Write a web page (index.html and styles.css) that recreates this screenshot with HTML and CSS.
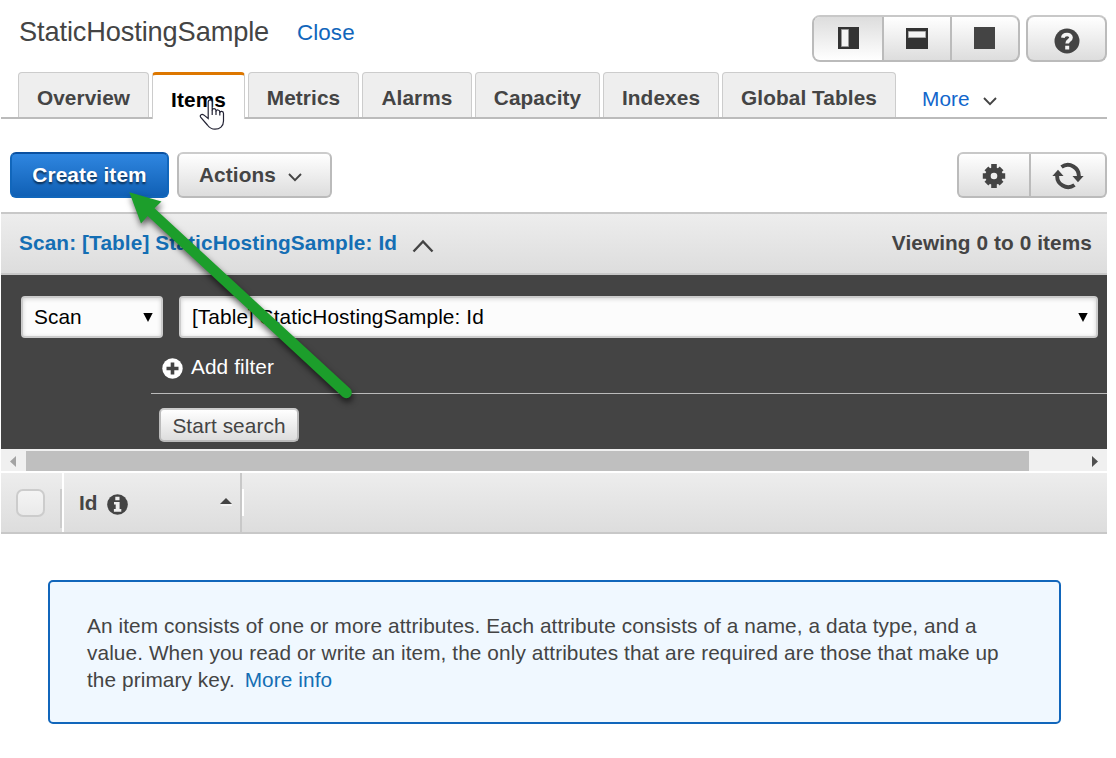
FILE: index.html
```html
<!DOCTYPE html>
<html lang="en">
<head>
<meta charset="utf-8">
<title>StaticHostingSample</title>
<link rel="stylesheet" href="styles.css">
</head>
<body>
<div class="page">
  <header class="header">
    <h1 class="title">StaticHostingSample</h1>
    <a class="close">Close</a>
    <div class="group layout-group">
      <button class="seg seg-active"><svg width="22" height="22" viewBox="0 0 22 22"><path fill="#333" d="M0 0h21v22H0z"/><path fill="#f4f4f4" stroke="#999" d="M3.500 2.500h7v17h-7z"/></svg></button>
      <button class="seg"><svg width="22" height="22" viewBox="0 0 22 22"><path fill="#333" d="M0 1h22v21H0z"/><path fill="#f4f4f4" stroke="#aaa" d="M2.500 4.500h17v6h-17z"/></svg></button>
      <button class="seg"><svg width="22" height="22" viewBox="0 0 22 22"><path fill="#444" d="M0 0h21v22H0z"/></svg></button>
    </div>
    <div class="group help-group">
      <button class="seg"><svg width="26" height="26" viewBox="0 0 26 26"><circle cx="13" cy="13" r="12.500" fill="#444"/><path d="M8.800 9.800C9.300 5.500 16.900 5.400 17 9.500C17 12.600 13.200 12 13.200 15.600" fill="none" stroke="#f4f4f4" stroke-width="3.700"/><path d="M11.200 17.700h4v3.900h-4z" fill="#f4f4f4"/></svg></button>
    </div>
  </header>

  <nav class="tabs">
    <a class="tab t-overview">Overview</a>
    <a class="tab tab-active t-items">Items</a>
    <a class="tab t-metrics">Metrics</a>
    <a class="tab t-alarms">Alarms</a>
    <a class="tab t-capacity">Capacity</a>
    <a class="tab t-indexes">Indexes</a>
    <a class="tab t-global">Global Tables</a>
    <a class="more">More <svg width="14" height="9" viewBox="0 0 14 9"><path d="M1 1l6 6.200L13 1" fill="none" stroke="#444" stroke-width="1.900"/></svg></a>
  </nav>

  <div class="toolbar">
    <button class="btn primary">Create item</button>
    <button class="btn actions">Actions <svg width="14" height="9" viewBox="0 0 14 9"><path d="M1 1l6 6.200L13 1" fill="none" stroke="#444" stroke-width="1.900"/></svg></button>
    <div class="group tools-group">
      <button class="seg seg-gear"><svg width="24" height="26" viewBox="-12 -13 24 26"><g fill="#444"><circle r="8.700"/><path d="M-2.800-12h5.600v24h-5.600z"/><path d="M-11.200-2.700h22.400v5.400h-22.400z"/><path d="M-2.700-10.700h5.400v21.400h-5.400z" transform="rotate(45)"/><path d="M-2.700-10.700h5.400v21.400h-5.400z" transform="rotate(-45)"/></g><circle r="3.300" fill="#efefef"/></svg></button>
      <button class="seg"><svg width="32" height="28" viewBox="-16 -14 32 28"><g><path d="M-6.500-9A11 11 0 0 1 10.800 1" fill="none" stroke="#444" stroke-width="3.900"/><path d="M4.500 0L15.600 0L10 6.300z" fill="#444"/></g><g transform="rotate(180)"><path d="M-6.500-9A11 11 0 0 1 10.800 1" fill="none" stroke="#444" stroke-width="3.900"/><path d="M4.500 0L15.600 0L10 6.300z" fill="#444"/></g></svg></button>
    </div>
  </div>

  <div class="scanbar">
    <a class="scan-title">Scan: [Table] StaticHostingSample: Id</a>
    <svg class="scan-caret" width="22" height="14" viewBox="0 0 22 14"><path d="M1.500 12.500L11 2.500l9.500 10" fill="none" stroke="#444" stroke-width="2.400"/></svg>
    <span class="viewing">Viewing 0 to 0 items</span>
  </div>

  <section class="query">
    <div class="selects">
      <div class="select select-op"><span>Scan</span><svg width="10" height="9" viewBox="0 0 10 9"><path d="M.300 0h9.400L5 9z"/></svg></div>
      <div class="select select-table"><span>[Table] StaticHostingSample: Id</span><svg width="10" height="9" viewBox="0 0 10 9"><path d="M.300 0h9.400L5 9z"/></svg></div>
    </div>
    <div class="filter">
      <svg width="21" height="21" viewBox="0 0 21 21"><circle cx="10.500" cy="10.500" r="10.200" fill="#fff"/><path d="M10.500 4.500v12M4.500 10.500h12" stroke="#444" stroke-width="3.600"/></svg>
      <span>Add filter</span>
    </div>
    <button class="start">Start search</button>
  </section>

  <div class="scrollbar">
    <svg width="25" height="22" viewBox="0 0 25 22"><path d="M15 7v11L9 12.500z" fill="#a3a3a3"/></svg>
    <div class="thumb"></div>
    <svg width="25" height="22" viewBox="0 0 25 22"><path d="M10 7v11l6-5.500z" fill="#505050"/></svg>
  </div>

  <div class="thead">
    <div class="th-check"><span class="checkbox"></span><span class="rule-grey"></span></div>
    <div class="th-id">
      <span>Id</span>
      <svg class="info-icon" width="21" height="21" viewBox="0 0 21 21"><circle cx="10.500" cy="10.500" r="10.300" fill="#444"/><path fill="#eee" d="M8.300 2.800h4.200v3.500H8.300zM7 8h5.600v7h1.700v2.700H6.900V15h1.800v-4.400H7z"/></svg>
      <svg class="sort" width="12" height="8" viewBox="0 0 12 8"><path d="M0 6L6 0l6 6z" fill="#444"/><path d="M1 7h11" stroke="#fff"/></svg>
    </div>
    <span class="rule-white"></span>
  </div>

  <div class="notice">An item consists of one or more attributes. Each attribute consists of a name, a data type, and a<br>value. When you read or write an item, the only attributes that are required are those that make up<br>the primary key. <a class="info-link">More info</a></div>
</div>

<svg class="cursor" width="28" height="34" viewBox="0 0 28 34"><path d="M9.200 20.500V4.200c0-3 4-3 4 0v8.300c0-2.500 3.800-2.400 3.800.200v.800c.200-2.200 3.800-2 3.800.400v.800c.400-2 3.700-1.600 3.700.700v7.500c0 5.400-3.800 8.300-8.500 8.300c-3.500 0-5.700-1.600-7.600-4.200L1.800 19.500c-1.500-2.100.8-4.100 2.900-2.600z" fill="#fff" stroke="#223" stroke-width="1.200"/><path d="M13.200 12v5M17 13v4M20.800 14v3.500" stroke="#223" stroke-width="1.200"/></svg>
<svg class="pointer" width="250" height="235" viewBox="120 180 250 235"><path d="M129.300 192.300L161.500 201.500L154.500 208.300L350 388.600A5.500 5.500 0 0 1 342.500 396.800L147.700 216L141 223.500z" fill="#1c9e2b"/></svg>
</body>
</html>
```

FILE: styles.css
```css
* { box-sizing: border-box; }
body {
  margin: 0;
  width: 1116px;
  height: 758px;
  position: relative;
  overflow: hidden;
  background: #fff;
  color: #444;
  font: 20.8px/26px "Liberation Sans", Arial, sans-serif;
  letter-spacing: .09px;
}
svg { display: block; flex: none; }
button { font: inherit; letter-spacing: inherit; color: inherit; margin: 0; padding: 0; background: none; border: 0; }
.page { margin-left: 1px; width: 1106px; }

.header { display: flex; align-items: flex-start; height: 72px; padding: 15px 0 0 18px; }
.title { margin: 0; font-size: 27.2px; font-weight: 400; line-height: 34px; letter-spacing: -.12px; white-space: nowrap; width: 278px; }
.close { font-size: 22.4px; line-height: 36px; color: #1166bb; }
.group {
  display: flex;
  height: 47px;
  border: 2px solid #bbb;
  border-top-color: #c8c8c8;
  border-radius: 8px;
  background: linear-gradient(#fff, #ddd);
  overflow: hidden;
}
.seg { flex: 1; display: flex; align-items: center; justify-content: center; }
.seg + .seg { border-left: 2px solid #bbb; }
.seg-active { background: linear-gradient(#ddd, #fff); padding-left: 2px; }
.layout-group { width: 208px; margin-left: auto; }
.layout-group svg { margin-bottom: 1px; }
.help-group { width: 81px; margin-left: 6px; }
.help-group svg { margin-top: 4px; }

.tabs { display: flex; gap: 3px; height: 47px; padding-left: 17px; border-bottom: 2px solid #bbb; }
.tab {
  height: 45px;
  border: 1px solid #ccc;
  border-bottom: 0;
  border-radius: 4px 4px 0 0;
  background: #eee;
  font-weight: 700;
  line-height: 50px;
  text-align: center;
  white-space: nowrap;
}
.tab-active { height: 47px; border-top: 3px solid #dd7700; background: #fff; color: #000; }
.t-overview { width: 131px; }
.t-items { width: 93px; }
.t-metrics { width: 111px; }
.t-alarms { width: 110px; }
.t-capacity { width: 125px; }
.t-indexes { width: 116px; }
.t-global { width: 174px; }
.more { display: flex; align-items: center; gap: 13px; margin-left: 23px; height: 45px; padding-top: 9px; color: #1166cc; }
.more svg { margin-top: 4px; }

.toolbar { display: flex; gap: 8px; height: 93px; padding: 33px 0 0 9px; }
.btn { height: 46px; border-radius: 6px; font-weight: 700; }
.primary {
  width: 159px;
  border: 2px solid #1166bb;
  border-top-color: #0a50a0;
  background: linear-gradient(#2f86e0, #1060b5);
  color: #fff;
  text-shadow: 0 2px 2px rgba(0, 0, 0, .6);
}
.actions {
  display: flex;
  align-items: center;
  gap: 12px;
  width: 155px;
  padding-left: 20px;
  border: 2px solid #bbb;
  border-top-color: #ccc;
  background: linear-gradient(#fff, #ddd);
}
.actions svg { margin-top: 4px; }
.tools-group { width: 150px; height: 46px; margin-left: auto; border-radius: 6px; }
.tools-group svg { margin-top: 2px; }
.seg-gear { flex: 0 0 70px; }

.scanbar {
  display: flex;
  align-items: center;
  height: 63px;
  padding: 0 15px 1px 18px;
  border-top: 2px solid #c8c8c8;
  border-bottom: 2px solid #c8c8c8;
  background: linear-gradient(#ededed, #ddd);
  font-weight: 700;
}
.scan-title { color: #146eb4; letter-spacing: .11px; }
.scan-caret { margin: 5px 0 0 15px; }
.viewing { margin-left: auto; }

.query { height: 174px; padding: 21px 0 0 20px; background: #444; }
.selects { display: flex; gap: 16px; }
.select {
  display: flex;
  align-items: center;
  justify-content: space-between;
  height: 42px;
  padding: 0 8px 0 11px;
  border: 2px solid #ccc;
  border-radius: 4px;
  background: #fcfcfc;
  box-shadow: inset 0 1px 4px rgba(0, 0, 0, .16);
  color: #000;
}
.select-op { width: 142px; }
.select-table { width: 919px; }
.filter { display: flex; align-items: center; gap: 8px; height: 56px; margin-left: 130px; padding: 2px 0 0 11px; border-bottom: 1px solid #bbb; color: #fff; }
.filter svg { margin-top: 4px; }
.start {
  display: block;
  width: 140px;
  height: 34px;
  margin: 14px 0 0 138px;
  padding-top: 2px;
  border: 2px solid #bbb;
  border-top-color: #ccc;
  border-radius: 5px;
  background: linear-gradient(#fff, #ddd);
}

.scrollbar { display: flex; justify-content: space-between; height: 24px; background: #f0f0f0; border-bottom: 2px solid #fff; }
.thumb { width: 1003px; height: 20px; margin: 2px auto 0 0; background: #bfbfbf; }

.thead { display: flex; height: 61px; border-bottom: 2px solid #c8c8c8; background: linear-gradient(#ededed, #ddd); }
.th-check { display: flex; align-items: flex-start; justify-content: space-between; width: 63px; padding: 16px 0 0 15px; border-right: 2px solid #fff; }
.checkbox { width: 29px; height: 28px; border: 2px solid #ccc; border-radius: 7px; background: linear-gradient(#f4f4f4, #eaeaea); }
.rule-grey { width: 2px; height: 39px; background: #ccc; }
.th-id { display: flex; align-items: center; width: 178px; padding: 0 8px 0 15px; border-right: 2px solid #c8c8c8; font-weight: 700; }
.info-icon { margin: 4px auto 0 9px; }
.sort { margin-bottom: 1px; }
.rule-white { width: 2px; height: 27px; margin-top: 16px; background: #fff; }

.notice {
  width: 1013px;
  height: 144px;
  margin: 46px 0 0 47px;
  padding: 30px 0 0 37px;
  border: 2px solid #1166bb;
  border-radius: 5px;
  background: #f0f8ff;
  line-height: 27px;
  white-space: nowrap;
}
.info-link { margin-left: 4px; color: #146eb4; }

.cursor { position: absolute; left: 199px; top: 98px; }
.pointer { position: absolute; left: 120px; top: 180px; filter: drop-shadow(1px 4px 3px rgba(0, 0, 0, .6)); }
```
